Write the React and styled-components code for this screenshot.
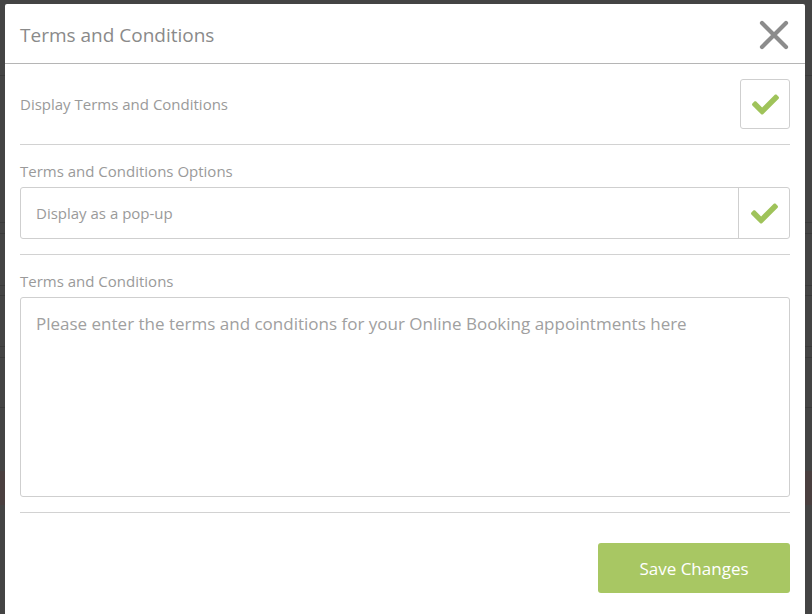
import React from 'react'
import styled, { createGlobalStyle } from 'styled-components'
import { FaCheck } from 'react-icons/fa'

const GlobalStyle = createGlobalStyle`
  html, body {
    margin: 0;
    height: 100%;
    overflow: hidden;
  }
  body {
    font-family: "Open Sans", "Noto Sans", sans-serif;
    background: #444444;
  }
`

const Backdrop = styled.div`
  height: 614px;
  padding: 4px 7px 0 5px;
  box-sizing: border-box;
  background:
    linear-gradient(#3a3a3a, #3a3a3a) 0 75px / 100% 1px no-repeat,
    linear-gradient(#3a3a3a, #3a3a3a) 0 222px / 100% 1px no-repeat,
    linear-gradient(#3a3a3a, #3a3a3a) 0 233px / 100% 1px no-repeat,
    linear-gradient(#3a3a3a, #3a3a3a) 0 285px / 100% 1px no-repeat,
    linear-gradient(#3a3a3a, #3a3a3a) 0 295px / 100% 1px no-repeat,
    linear-gradient(#3a3a3a, #3a3a3a) 0 346px / 100% 1px no-repeat,
    linear-gradient(#3a3a3a, #3a3a3a) 0 357px / 100% 1px no-repeat,
    linear-gradient(#3a3a3a, #3a3a3a) 0 407px / 100% 1px no-repeat,
    linear-gradient(#4a3f3f, #4a3f3f) 0 471px / 100% 34px no-repeat,
    #444444;
`

const Modal = styled.div`
  background: #fff;
  border-radius: 2px 2px 0 0;
  height: 100%;
  display: flex;
  flex-direction: column;
`

const Header = styled.div`
  height: 57px;
  display: flex;
  align-items: center;
  justify-content: space-between;
  padding: 2px 14px 0 15px;
  border-bottom: 1px solid #b5b5b5;
`

const Title = styled.h4`
  margin: 0;
  font-size: 19px;
  font-weight: 400;
  color: #8a8a8a;
`

const Close = styled.button`
  border: 0;
  background: none;
  padding: 0;
  width: 34px;
  height: 34px;
  display: flex;
  align-items: center;
  justify-content: center;
  cursor: pointer;
`

const Body = styled.div`
  padding: 15px 15px 0;
  display: flex;
  flex-direction: column;
`

const Section = styled.div`
  display: flex;
  flex-direction: ${p => (p.$inline ? 'row' : 'column')};
  align-items: ${p => (p.$inline ? 'center' : 'stretch')};
  justify-content: space-between;
  gap: 5px;
  padding-bottom: 15px;
  margin-bottom: 15px;
  border-bottom: 1px solid #d2d2d2;
`

const Label = styled.span`
  font-size: 15px;
  color: #9a9a9a;
  line-height: 22px;
`

const CheckBox = styled.div`
  width: 50px;
  height: 50px;
  box-sizing: border-box;
  border: 1px solid #cfcfcf;
  border-radius: 3px;
  display: flex;
  align-items: center;
  justify-content: center;
  color: #9fc35a;
`

const Select = styled.div`
  height: 52px;
  box-sizing: border-box;
  border: 1px solid #cfcfcf;
  border-radius: 3px;
  display: flex;
  align-items: stretch;
`

const SelectText = styled.div`
  flex: 1;
  display: flex;
  align-items: center;
  padding: 0 15px;
  font-size: 15px;
  color: #9a9a9a;
`

const SelectCheck = styled.div`
  width: 50px;
  border-left: 1px solid #cfcfcf;
  display: flex;
  align-items: center;
  justify-content: center;
  color: #9fc35a;
`

const TextArea = styled.textarea`
  height: 200px;
  box-sizing: border-box;
  border: 1px solid #cfcfcf;
  border-radius: 3px;
  padding: 14px 15px;
  font-family: inherit;
  font-size: 17px;
  line-height: 24px;
  color: #666;
  resize: none;
  outline: none;

  &::placeholder {
    color: #a0a0a0;
  }
`

const Footer = styled.div`
  display: flex;
  justify-content: flex-end;
  padding: 15px 15px 0;
`

const SaveButton = styled.button`
  width: 192px;
  height: 50px;
  border: 0;
  border-radius: 3px;
  background: #a8c763;
  color: #fff;
  font-family: inherit;
  font-size: 17px;
  cursor: pointer;
`

const CloseIcon = () => (
  <svg width="30" height="30" viewBox="0 0 30 30">
    <path d="M3 3 L27 27 M27 3 L3 27" stroke="#8c8c8c" strokeWidth="4.2" strokeLinecap="round" />
  </svg>
)

const App = () => (
  <>
    <GlobalStyle />
    <Backdrop>
      <Modal>
        <Header>
          <Title>Terms and Conditions</Title>
          <Close aria-label="Close"><CloseIcon /></Close>
        </Header>
        <Body>
          <Section $inline>
            <Label>Display Terms and Conditions</Label>
            <CheckBox><FaCheck size={27} /></CheckBox>
          </Section>
          <Section>
            <Label>Terms and Conditions Options</Label>
            <Select>
              <SelectText>Display as a pop-up</SelectText>
              <SelectCheck><FaCheck size={27} /></SelectCheck>
            </Select>
          </Section>
          <Section>
            <Label>Terms and Conditions</Label>
            <TextArea placeholder="Please enter the terms and conditions for your Online Booking appointments here" />
          </Section>
        </Body>
        <Footer>
          <SaveButton>Save Changes</SaveButton>
        </Footer>
      </Modal>
    </Backdrop>
  </>
)

export default App
